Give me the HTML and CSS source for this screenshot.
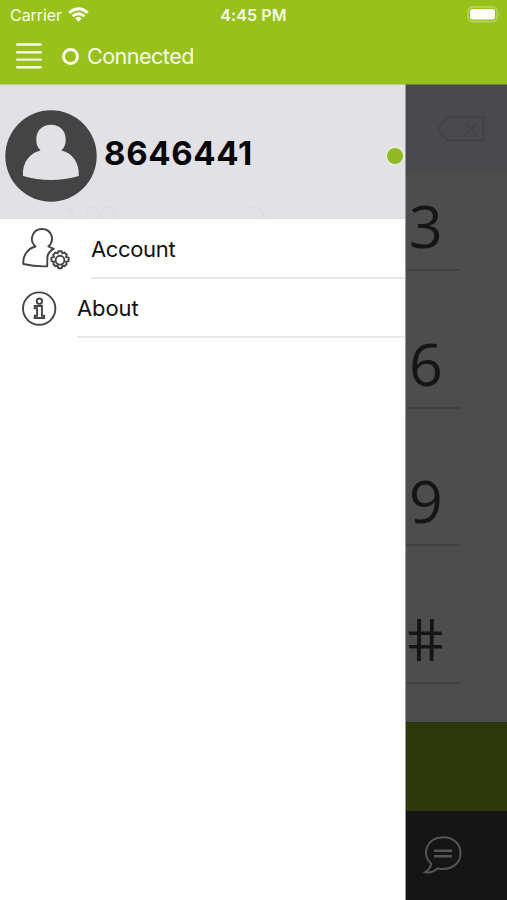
FILE: index.html
```
<!DOCTYPE html>
<html lang="en">
<head>
<meta charset="utf-8">
<title>Menu</title>
<link rel="stylesheet" href="styles.css">
</head>
<body>
<header class="top">
  <div class="status">
    <div class="carrier"><span>Carrier</span>
      <svg width="21" height="16" viewBox="0 0 21 16"><g fill="none" stroke="#fff" stroke-width="2.8"><path d="M1.2 5.8Q10.5-2.3 19.8 5.8"/><path d="M4.6 9.3Q10.5 4.2 16.4 9.3"/></g><path d="M7.2 11.4Q10.5 8.7 13.8 11.4L10.5 14.8Z" fill="#fff"/></svg>
    </div>
    <div class="time">4:45 PM</div>
    <svg class="battery" width="34" height="17" viewBox="0 0 34 17"><rect x="1" y="1" width="29" height="14.5" rx="4.5" fill="none" stroke="#b9d869" stroke-width="1.3"/><rect x="3" y="3" width="25" height="10.5" rx="2.5" fill="#fff"/><path d="M31.5 6Q33.5 8.2 31.5 10.5Z" fill="#b9d869"/></svg>
  </div>
  <div class="nav">
    <svg width="26" height="26" viewBox="0 0 26 26"><path d="M1.2 1.5H24.8M1.2 9.2H24.8M1.2 16.6H24.8M1.2 24.3H24.8" stroke="#f7fde5" stroke-width="2.4" stroke-linecap="round"/></svg>
    <span class="ring"></span>
    <span class="state">Connected</span>
  </div>
</header>
<main class="body">
  <aside class="drawer">
    <section class="profile">
      <svg class="avatar" width="92" height="92" viewBox="0 0 92 92"><circle cx="46" cy="46" r="45.7" fill="#444"/><path d="M18 66C17 52 25 43 35.5 40.5C32 37 31.3 33.5 31.3 29.5C31.3 20.5 37.5 14.8 46 14.8C54.5 14.8 60.7 20.5 60.7 29.5C60.7 33.5 60 37 56.5 40.5C67 43 74.5 52 73.8 66Q46 74 18 66Z" fill="#e2e1e6"/></svg>
      <div class="number">8646441</div>
      <span class="presence"></span>
      <svg class="ghost" width="220" height="13" viewBox="0 0 220 13" fill="none" stroke="#dddce1" stroke-width="2"><path d="M4 5v2M12 5l5-3v11M32 13V8a6 6 0 0 1 12 0v5M47 13V8a6 6 0 0 1 12 0v5M190 4q18-6 19 9"/></svg>
    </section>
    <div class="item account">
      <svg width="50" height="44" viewBox="0 0 50 44" fill="none" stroke="#444" stroke-width="1.9" stroke-linejoin="round"><path d="M26.2 39.3Q14 39.8 2.3 37C1.6 28.5 6.5 21.8 14.5 19.5C7.5 13.5 11.5 2 21 2C30.5 2 34.4 13 27.4 19.5L32.8 21.9C28.6 24 26.2 27.4 26.4 31.5Z"/><circle cx="39" cy="33.2" r="4.4"/><path d="M37.3 24.3h3.4l.7 2.1 2-.9 2.4 2.3-.9 2.1 2.7.8v3.4l-2.7.8.9 2.1-2.4 2.3-2-.9-.7 2.8h-3.4l-.7-2.8-2 .9-2.4-2.3.9-2.1-2.7-.8v-3.4l2.7-.8-.9-2.1 2.4-2.3 2 .9Z"/></svg>
      <div class="label">Account</div>
    </div>
    <div class="item about">
      <svg width="36" height="36" viewBox="0 0 36 36" fill="none" stroke="#444" stroke-width="1.9"><circle cx="18.2" cy="17.6" r="16.2"/><circle cx="18.4" cy="10.2" r="2.7"/><path d="M13.7 15H20.9V24.8H23.1V27H13.7V24.8H16.1V17.2H13.7Z"/></svg>
      <div class="label">About</div>
    </div>
  </aside>
  <section class="dimmed">
    <div class="entry"><svg width="48" height="28" viewBox="0 0 48 28" fill="none" stroke="#424244" stroke-width="1.5"><path d="M11 2H46.5V25.5H11L2 16V12ZM28 8L40 20M40 8L28 20"/></svg></div>
    <div class="keys">
      <div class="key">3</div><div class="key">6</div><div class="key">9</div><div class="key"><span class="hash">#</span></div>
    </div>
    <div class="call"></div>
    <div class="tabs"><svg width="40" height="40" viewBox="0 0 40 40" fill="none" stroke="#555" stroke-width="2"><path d="M8.2 28.8C-1.8 20 3 2.5 20 2.2C30.5 2.2 37.5 9 37.5 18.2C37.5 29 27.5 36 14.5 33.4Q9 38.3 2.2 37.2Q7.5 33.6 8.2 28.8Z"/><path d="M11 15.8H29M11 21.3H29" stroke-width="2.5"/></svg></div>
  </section>
</main>
</body>
</html>
```
FILE: styles.css
```
* { box-sizing: border-box; }
body { margin: 0; width: 507px; height: 900px; overflow: hidden; font-family: Inter, "Liberation Sans", sans-serif; background: #fff; }
svg { display: block; flex: none; }
.top { height: 84px; background: #98c11c; color: #f7fde5; }
.status { height: 30px; display: grid; grid-template-columns: 1fr auto 1fr; align-items: center; padding: 0 6px 0 10px; }
.carrier { display: flex; align-items: center; gap: 6px; font-size: 16px; letter-spacing: -.05px; }
.time { font-size: 16px; font-weight: 600; letter-spacing: .1px; margin-right: 4px; }
.battery { justify-self: end; margin-top: -2px; }
.nav { height: 52px; display: flex; align-items: center; padding-left: 16px; }
.ring { width: 17px; height: 17px; border: 3px solid #f7fde5; border-radius: 50%; margin: 0 8px 0 20px; }
.state { font-size: 21.5px; letter-spacing: -.5px; }
.body { height: 816px; display: flex; }
.drawer { width: 406px; background: #fff; border-right: 1px solid #999; }
.profile { position: relative; height: 135px; background: #e2e1e6; border-top: 1px solid #bccf80; border-bottom: 1px solid #d9d9dc; display: flex; align-items: center; padding: 9px 2px 0 5px; overflow: hidden; }
.number { margin: -6px 0 0 7px; font-size: 33px; letter-spacing: .65px; font-weight: 700; color: #060608; line-height: 40px; white-space: nowrap; }
.presence { width: 16px; height: 16px; margin: 0 0 0 auto; border-radius: 50%; background: #91b925; box-shadow: 0 0 0 2px #e9eddf; }
.ghost { position: absolute; left: 55px; bottom: 0; }
.item { display: flex; align-items: center; color: #111; font-size: 22px; }
.label { flex: 1; border-bottom: 2px solid #e8e8e8; }
.account { height: 60px; padding-left: 21px; }
.account .label { height: 60px; line-height: 61px; margin-left: 20px; letter-spacing: -.35px; }
.about { height: 59px; padding-left: 21px; }
.about .label { height: 59px; line-height: 59px; margin-left: 20px; letter-spacing: -.1px; }
.dimmed { flex: 1; display: flex; flex-direction: column; background: #4d4d4d; }
.entry { height: 90px; background: #4a494c; border-top: 1px solid #6d8438; padding: 30px 0 0 31px; }
.keys { height: 548px; }
.key { width: 54px; height: 137.5px; padding-left: 3px; display: flex; align-items: flex-end; border-bottom: 2px solid #424242; color: #151515; font: 59px/87px "Open Sans", "Noto Sans", sans-serif; }
.key:first-child { height: 97px; }
.hash { display: inline-block; margin-left: -3px; transform: skewX(10.5deg); }
.call { height: 89px; background: #2e390b; }
.tabs { flex: 1; background: #151515; padding: 24px 0 0 17px; }
```
